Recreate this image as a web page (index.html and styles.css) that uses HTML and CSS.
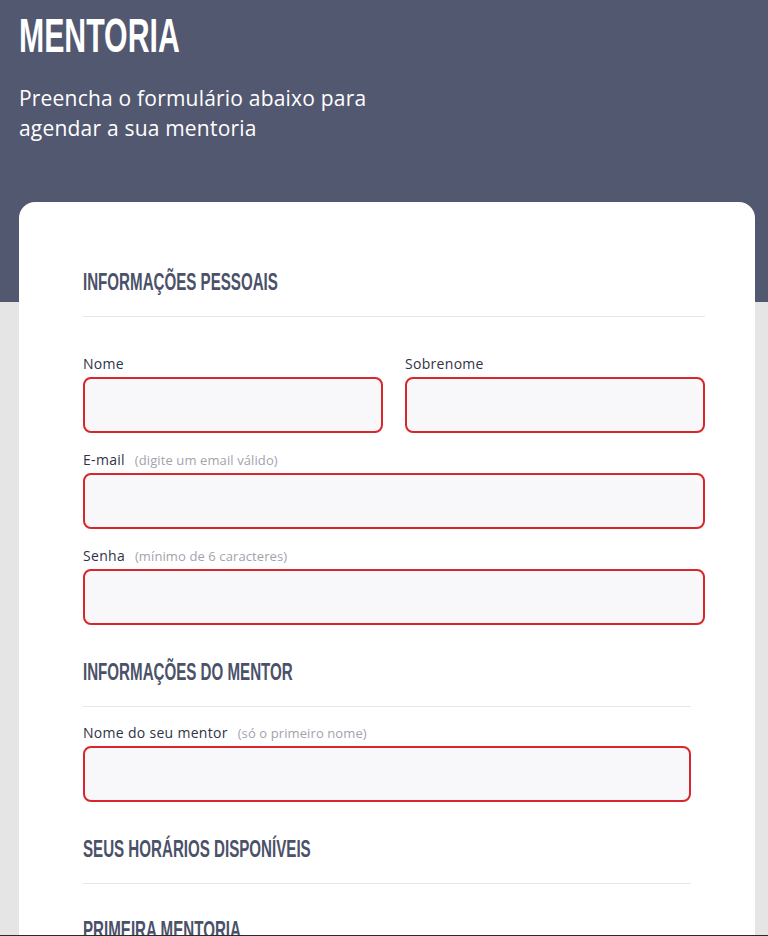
FILE: index.html
```html
<!DOCTYPE html>
<html lang="pt-BR">
<head>
<meta charset="utf-8">
<title>Mentoria</title>
<link rel="stylesheet" href="styles.css">
</head>
<body>
<header class="hero">
  <h1 class="hero-title"><span class="condensed">MENTORIA</span></h1>
  <p class="hero-subtitle">Preencha o formulário abaixo para agendar a sua mentoria</p>
</header>
<main class="card">
  <section class="section section-personal">
    <h2 class="section-title"><span class="condensed">INFORMAÇÕES PESSOAIS</span></h2>
    <hr class="divider">
    <div class="fields">
      <div class="row-2">
        <div class="field">
          <label class="label">Nome</label>
          <input class="input" type="text">
        </div>
        <div class="field">
          <label class="label">Sobrenome</label>
          <input class="input" type="text">
        </div>
      </div>
      <div class="field">
        <label class="label">E-mail <span class="hint">(digite um email válido)</span></label>
        <input class="input" type="email">
      </div>
      <div class="field">
        <label class="label">Senha <span class="hint">(mínimo de 6 caracteres)</span></label>
        <input class="input" type="password">
      </div>
    </div>
  </section>
  <section class="section section-narrow">
    <h2 class="section-title"><span class="condensed">INFORMAÇÕES DO MENTOR</span></h2>
    <hr class="divider">
    <div class="fields fields-tight">
      <div class="field">
        <label class="label">Nome do seu mentor <span class="hint">(só o primeiro nome)</span></label>
        <input class="input" type="text">
      </div>
    </div>
  </section>
  <section class="section section-narrow">
    <h2 class="section-title"><span class="condensed">SEUS HORÁRIOS DISPONÍVEIS</span></h2>
    <hr class="divider">
    <h3 class="sub-title"><span class="condensed">PRIMEIRA MENTORIA</span></h3>
    <div class="fields fields-tight">
      <div class="field">
        <label class="label">Data</label>
        <input class="input" type="text">
      </div>
    </div>
  </section>
</main>
<div class="bottom-edge"></div>
</body>
</html>
```

FILE: styles.css
```css
* { box-sizing: border-box; }

body {
  margin: 0;
  background: #e5e5e5;
  font-family: "Open Sans", "Noto Sans", sans-serif;
}

.condensed {
  display: inline-block;
  transform: scaleX(0.63);
  transform-origin: left center;
  white-space: nowrap;
}

.hero {
  background: #535871;
  height: 302px;
  padding: 12px 19px 0;
  color: #fff;
}

.hero-title {
  margin: 0;
  font-family: "Liberation Sans", sans-serif;
  font-weight: 700;
  font-size: 48px;
  line-height: 48px;
}

.hero-subtitle {
  margin: 23px 0 0;
  max-width: 390px;
  font-size: 21px;
  line-height: 30px;
  letter-spacing: 0.2px;
  font-weight: 400;
}

.card {
  background: #fff;
  margin: -100px 0 0 19px;
  width: 736px;
  border-radius: 16px;
  padding: 68px 50px 80px 64px;
}

.section-title,
.sub-title {
  margin: 0;
  font-family: "Liberation Sans", sans-serif;
  font-weight: 700;
  font-size: 24px;
  line-height: 24px;
  color: #4b5169;
}

.section + .section { margin-top: 35px; }

.section-narrow { margin-right: 14px; }

.divider {
  border: 0;
  height: 1px;
  background: #e6e6ee;
  margin: 22px 0 0;
}

.fields {
  margin-top: 36px;
  display: flex;
  flex-direction: column;
  gap: 16px;
}

.fields-tight { margin-top: 15px; }

.sub-title { margin-top: 34px; }

.row-2 {
  display: grid;
  grid-template-columns: 1fr 1fr;
  gap: 22px;
}

.field {
  display: flex;
  flex-direction: column;
}

.label {
  display: block;
  height: 22px;
  font-size: 14px;
  line-height: 22px;
  letter-spacing: 0.3px;
  color: #2f3347;
  margin-bottom: 2px;
  white-space: nowrap;
}

.hint {
  font-size: 13px;
  line-height: 1;
  letter-spacing: 0.1px;
  color: #a3a3ab;
  margin-left: 6px;
}

.input {
  height: 56px;
  width: 100%;
  border: 2px solid #d8262c;
  border-radius: 8px;
  background: #f8f8fb;
  font: inherit;
  outline: none;
}

.bottom-edge {
  position: fixed;
  left: 0;
  right: 0;
  bottom: 0;
  height: 1px;
  background: #2a2a2a;
}
```
